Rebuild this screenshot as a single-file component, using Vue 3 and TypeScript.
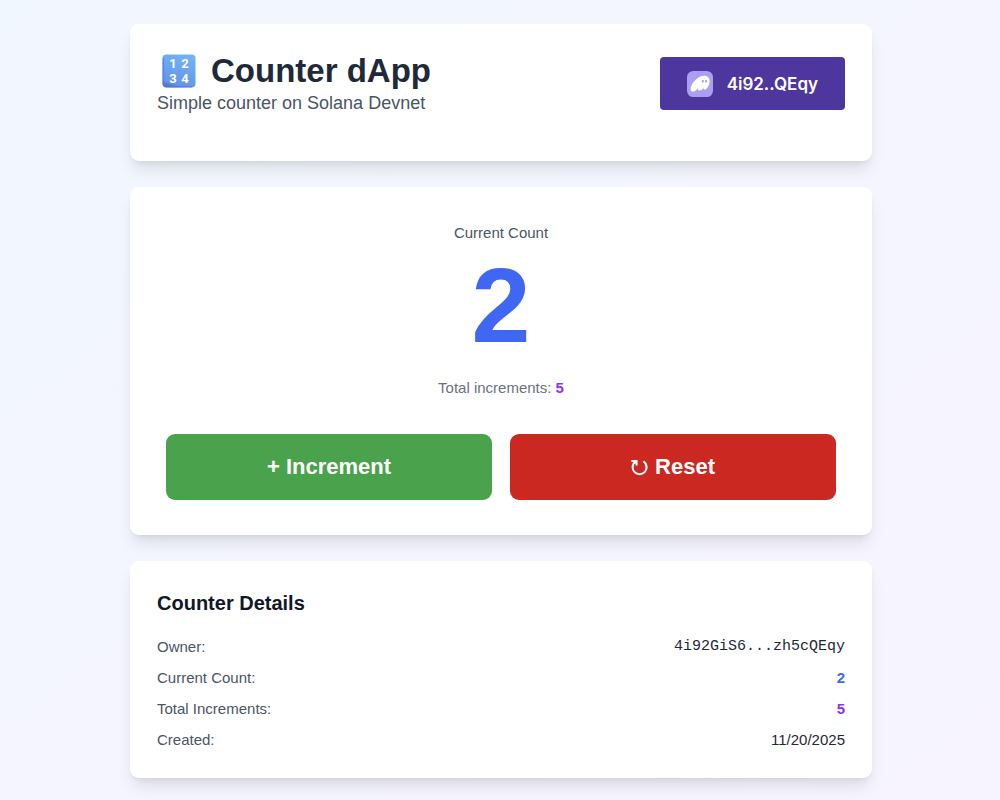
<script setup lang="ts">
import { computed, ref } from 'vue'

const count = ref(2)
const total = ref(5)
const owner = '4i92GiS6...zh5cQEqy'
const created = '11/20/2025'

const details = computed(() => [
  { label: 'Owner:', value: owner, tone: 'mono' },
  { label: 'Current Count:', value: String(count.value), tone: 'blue' },
  { label: 'Total Increments:', value: String(total.value), tone: 'purple' },
  { label: 'Created:', value: created, tone: 'plain' },
])

function increment() {
  count.value += 1
  total.value += 1
}

function reset() {
  count.value = 0
}
</script>

<template>
  <main class="page">
    <div class="container">
      <header class="card header">
        <div>
          <h1 class="title">
            <svg class="emoji" viewBox="0 0 34 34" aria-hidden="true">
              <defs>
                <linearGradient id="tile" x1="0.7" y1="0" x2="0.4" y2="1">
                  <stop offset="0" stop-color="#74b2f5" />
                  <stop offset="0.9" stop-color="#6396ea" />
                  <stop offset="1" stop-color="#5577d3" />
                </linearGradient>
              </defs>
              <rect x="0.5" y="0.5" width="33" height="33" rx="4" fill="url(#tile)" />
              <path d="M1.2 4V30Q1.4 32.6 4 32.8H30" fill="none" stroke="#5279d8" stroke-width="1" />
              <g class="digits">
                <text x="11" y="14">1</text>
                <text x="23" y="14">2</text>
                <text x="11" y="29">3</text>
                <text x="23" y="29">4</text>
              </g>
            </svg>
            <span>Counter dApp</span>
          </h1>
          <p class="subtitle">Simple counter on Solana Devnet</p>
        </div>
        <button type="button" class="wallet">
          <svg class="ghost" viewBox="0 0 108 108" aria-hidden="true">
            <rect width="108" height="108" rx="26" fill="#ab9ff2" />
            <path
              fill="#fffdf8"
              fill-rule="evenodd"
              d="M46.5267 69.9229C42.0054 76.8509 34.4292 85.6182 24.348 85.6182C19.5824 85.6182 15 83.6563 15 75.1342C15 53.4305 44.6326 19.8327 72.1268 19.8327C87.768 19.8327 94 30.6846 94 43.0079C94 58.8258 83.7355 76.9122 73.5321 76.9122C70.2939 76.9122 68.7053 75.1342 68.7053 72.314C68.7053 71.5783 68.8275 70.7812 69.0719 69.9229C65.5893 75.8699 58.8685 81.3878 52.5754 81.3878C47.993 81.3878 45.6713 78.5063 45.6713 74.4598C45.6713 72.9884 45.9768 71.4556 46.5267 69.9229ZM83.6761 42.5794C83.6761 46.1704 81.5575 47.9658 79.1875 47.9658C76.7816 47.9658 74.6989 46.1704 74.6989 42.5794C74.6989 38.9885 76.7816 37.1931 79.1875 37.1931C81.5575 37.1931 83.6761 38.9885 83.6761 42.5794ZM70.2103 42.5795C70.2103 46.1704 68.0916 47.9658 65.7216 47.9658C63.3157 47.9658 61.233 46.1704 61.233 42.5795C61.233 38.9885 63.3157 37.1931 65.7216 37.1931C68.0916 37.1931 70.2103 38.9885 70.2103 42.5795Z"
            />
          </svg>
          <span>4i92..QEqy</span>
        </button>
      </header>

      <section class="card counter">
        <p class="label">Current Count</p>
        <p class="number">{{ count }}</p>
        <p class="total">Total increments: <strong>{{ total }}</strong></p>
        <div class="actions">
          <button type="button" class="action green" @click="increment">+ Increment</button>
          <button type="button" class="action red" @click="reset">
            <svg class="reload" viewBox="0 0 18 18" aria-hidden="true">
              <path
                d="M0.4 3H5.6V7.6M4.6 3.6C2.6 4.8 1.6 7 1.6 9.2A7 7 0 0 0 15.6 9.2C15.6 7 14.6 4.8 12.4 3.2"
                fill="none"
                stroke="currentColor"
                stroke-width="2"
              />
            </svg>
            <span>Reset</span>
          </button>
        </div>
      </section>

      <section class="card">
        <h2 class="heading">Counter Details</h2>
        <dl class="details">
          <div v-for="item in details" :key="item.label" class="row">
            <dt>{{ item.label }}</dt>
            <dd :class="item.tone">{{ item.value }}</dd>
          </div>
        </dl>
      </section>
    </div>
  </main>
</template>

<style>
body {
  margin: 0;
}
</style>

<style scoped>
.page {
  box-sizing: border-box;
  min-height: 100vh;
  padding: 24px 14px 22px 16px;
  background: linear-gradient(to bottom right, #f1f7ff, #f4f5ff 50%, #f7f4ff);
  font-family: 'Liberation Sans', Arial, sans-serif;
  color: #1e2939;
}
.container {
  display: flex;
  flex-direction: column;
  gap: 26px;
  max-width: 742px;
  margin: 0 auto;
}
h1, h2, p, dl, dd {
  margin: 0;
}
button {
  border: 0;
  cursor: pointer;
}
.card {
  padding: 27px;
  border-radius: 9px;
  background: #fff;
  box-shadow: 0 11px 16px -3px rgba(0, 0, 0, 0.1), 0 4px 7px -4px rgba(0, 0, 0, 0.1);
}
.header {
  display: flex;
  align-items: center;
  justify-content: space-between;
  padding-bottom: 45px;
}
.title {
  display: flex;
  align-items: center;
  gap: 15px;
  padding-left: 5px;
  font-size: 33px;
  line-height: 40px;
}
.emoji {
  width: 34px;
  height: 34px;
}
.digits {
  fill: #fff;
  font: 700 13px Roboto, sans-serif;
  text-anchor: middle;
}
.subtitle {
  font-size: 18px;
  line-height: 25px;
  color: #4a5565;
}
.wallet {
  display: flex;
  align-items: center;
  gap: 14px;
  height: 53px;
  padding: 0 27px;
  border-radius: 4px;
  background: #4e369f;
  color: #fff;
  font: 600 17px Inter, sans-serif;
}
.ghost {
  width: 26px;
  height: 26px;
}
.counter {
  padding: 36px 36px 35px;
  text-align: center;
}
.label {
  font-size: 15px;
  line-height: 20px;
  color: #4a5565;
}
.number {
  margin: 9px 0 20px;
  font-size: 106px;
  font-weight: 700;
  line-height: 106px;
  color: #4066f4;
}
.total {
  font-size: 15px;
  line-height: 20px;
  color: #6a7282;
}
.total strong {
  color: #8b35f0;
}
.actions {
  display: grid;
  grid-template-columns: 1fr 1fr;
  gap: 18px;
  margin-top: 36px;
}
.action {
  display: flex;
  align-items: center;
  justify-content: center;
  gap: 6px;
  height: 66px;
  border-radius: 9px;
  color: #fff;
  font: 700 22px 'Liberation Sans', Arial, sans-serif;
}
.reload {
  width: 18px;
  height: 18px;
}
.green {
  background: #4aa24c;
}
.red {
  background: #cc2822;
}
.heading {
  font-size: 20px;
  line-height: 31px;
  color: #101828;
}
.details {
  display: flex;
  flex-direction: column;
  gap: 9px;
  margin-top: 17px;
  font-size: 15px;
  line-height: 22px;
}
.row {
  display: flex;
  justify-content: space-between;
}
dt {
  color: #4a5565;
}
.mono {
  font-family: 'Liberation Mono', monospace;
}
.blue {
  font-weight: 700;
  color: #4066f4;
}
.purple {
  font-weight: 700;
  color: #8b35f0;
}
</style>
